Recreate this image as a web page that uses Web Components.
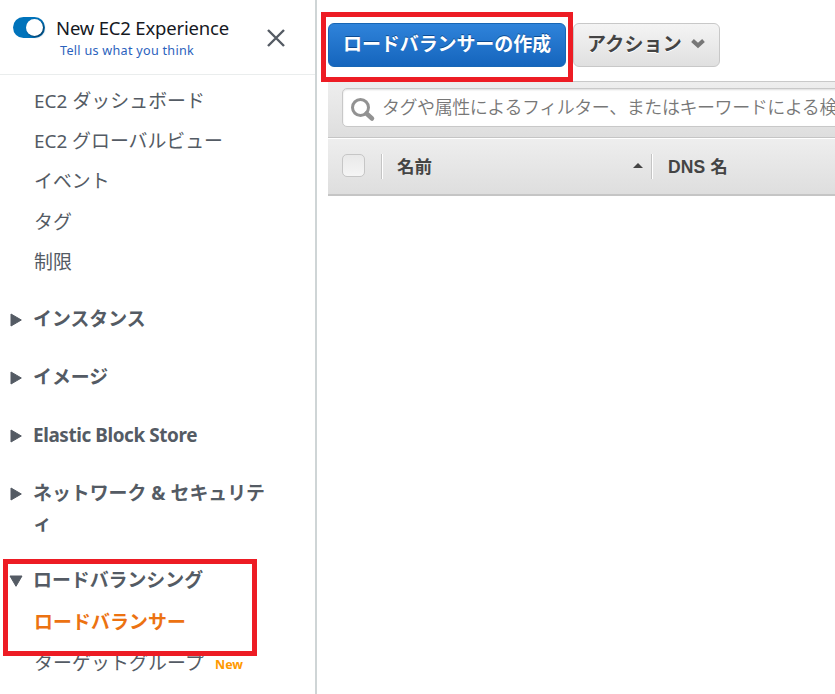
<!DOCTYPE html>
<html lang="ja">
<head>
<meta charset="utf-8">
<title>EC2</title>
<style>
html,body{margin:0;height:100%;overflow:hidden;background:#fff}
body{font-family:"Noto Sans","Noto Sans CJK JP",sans-serif;color:#545b64}
</style>
</head>
<body>
<ec2-app></ec2-app>
<script>
const define=(name,html,setup)=>customElements.define(name,class extends HTMLElement{
  constructor(){super();this.attachShadow({mode:'open'}).innerHTML=html}
  connectedCallback(){if(setup)setup(this,this.shadowRoot)}
});

/* Text run whose letter spacing is adjusted so that it occupies a given width. */
define('fit-text',`<style>:host{display:inline-block;white-space:nowrap}span{display:inline-block}</style><span><slot></slot></span>`,(el,root)=>{
  const w=parseFloat(el.getAttribute('width'));
  const s=root.querySelector('span');
  const n=[...el.textContent].length;
  const now=s.getBoundingClientRect().width;
  if(w&&now)s.style.letterSpacing=((w-now)/n).toFixed(3)+'px';
});

define('mark-box',`<style>:host{position:absolute;box-sizing:border-box;border:5px solid #ed1c24;z-index:5;pointer-events:none}</style>`);

define('experience-header',`<style>
:host{display:flex;box-sizing:border-box;height:75px;border-bottom:1px solid #eaeded;padding:15px 0 0 13px;align-items:flex-start}
.toggle{width:32px;height:21px;margin-top:2px;border-radius:11px;background:#0073bb;display:flex;justify-content:flex-end;align-items:center;box-sizing:border-box;padding-right:2px}
.toggle i{width:17px;height:17px;border-radius:50%;background:#fff;box-shadow:1px 1px 2px #00345a}
.t{margin-left:11px;width:200px}
.a{display:block;font-size:18.5px;line-height:25px;color:#16191f}
.b{display:block;font-size:12.6px;line-height:18px;margin:2px 0 0 4px;color:#2b62bd}
svg{margin:13px 0 0 10px}
</style>
<div class="toggle"><i></i></div>
<div class="t"><fit-text class="a" width="173">New EC2 Experience</fit-text><fit-text class="b" width="134">Tell us what you think</fit-text></div>
<svg width="20" height="20" viewBox="0 0 20 20"><path d="M2 2 18 18M18 2 2 18" stroke="#545b64" stroke-width="2.4" fill="none"/></svg>`);

define('nav-item',`<style>
:host{display:flex;align-items:center;height:40.4px;padding-left:34px;font-size:18.9px;font-weight:400;white-space:nowrap}
:host([active]){color:#ec7211;font-weight:700}
</style><slot></slot>`);

define('new-badge',`<style>:host{display:inline-block;font-size:12.5px;font-weight:700;color:#ff9900;margin:6px 0 0 11px}</style><fit-text width="28">New</fit-text>`);

define('nav-section',`<style>
:host{display:block;padding:14px 0}
.h{display:flex;padding-left:9px;font-size:18.9px;font-weight:700;line-height:30px}
svg{flex:none;margin:8px 10px 0 0}
:host([open]) svg{transform:rotate(90deg)}
.l{width:240px;word-break:break-all;line-break:anywhere}
.items{padding-top:6px}
:host([open]){padding-top:13px}
:host(:not([open])) .items{display:none}
</style>
<div class="h"><svg width="14" height="16" viewBox="0 0 14 16"><path d="M2 2 12.3 8 2 14Z" fill="#545b64" stroke="#545b64" stroke-linejoin="round"/></svg><div class="l"><slot name="title"></slot></div></div>
<div class="items"><slot></slot></div>`);

define('side-nav',`<style>
:host{display:block;box-sizing:border-box;width:317px;height:694px;overflow:hidden;border-right:2px solid #cfd5d6;background:#fff}
nav{padding-top:4.5px}
.links{padding-bottom:8.8px}
</style>
<experience-header></experience-header>
<nav>
<div class="links">
<nav-item><fit-text width="171">EC2 ダッシュボード</fit-text></nav-item>
<nav-item><fit-text width="189">EC2 グローバルビュー</fit-text></nav-item>
<nav-item>イベント</nav-item>
<nav-item>タグ</nav-item>
<nav-item>制限</nav-item>
</div>
<nav-section><span slot="title">インスタンス</span></nav-section>
<nav-section><span slot="title">イメージ</span></nav-section>
<nav-section><fit-text slot="title" width="164">Elastic Block Store</fit-text></nav-section>
<nav-section><span slot="title"><fit-text width="232">ネットワーク &amp; セキュリテ</fit-text><br>ィ</span></nav-section>
<nav-section open><span slot="title">ロードバランシング</span>
<nav-item active><fit-text width="152">ロードバランサー</fit-text></nav-item>
<nav-item><fit-text width="170">ターゲットグループ</fit-text><new-badge></new-badge></nav-item>
</nav-section>
</nav>`);

define('aws-button',`<style>
:host{display:flex;align-items:center;box-sizing:border-box;height:44px;border:1px solid #c8c8c8;border-radius:6px;font-size:19px;font-weight:700;color:#444;background:linear-gradient(#f4f4f4,#e0e0e0);text-shadow:0 1px 0 #fff;white-space:nowrap;padding:0 14px 4px 13px}
:host([primary]){color:#fff;border-color:#1766b5;background:linear-gradient(#2f83da,#1565bd);text-shadow:0 -1px 0 #0d4c93;padding:0 14px 4px}
</style><slot></slot>`);

define('search-box',`<style>
:host{display:flex;align-items:center;box-sizing:border-box;height:39px;width:520px;flex:none;border:1px solid #c8c8c8;border-radius:5px;background:#fff;padding-left:7px;color:#777;font-size:18px;font-weight:350;box-shadow:inset 0 1px 2px #ddd}
svg{margin:4px 6px 0 0;flex:none}
fit-text{padding-bottom:3px}
</style>
<svg width="26" height="26" viewBox="0 0 26 26" fill="none" stroke="#929292"><circle cx="10.5" cy="10.5" r="8" stroke-width="3"/><path d="M16.5 16.5 22 21.5" stroke-width="4.5" stroke-linecap="round"/></svg>
<fit-text width="455">タグや属性によるフィルター、またはキーワードによる検</fit-text>`);

define('table-head',`<style>
:host{display:flex;align-items:center;box-sizing:border-box;height:58px;background:linear-gradient(#eee,#dedede);border-top:1px solid #fff;border-bottom:2px solid #c5c5c5;padding:0 0 2px 14px;font-size:17.5px;font-weight:700;color:#444}
.check{box-sizing:border-box;width:23px;height:23px;border:1px solid #c6c6c6;border-radius:5px;background:linear-gradient(#e9e9e9,#f5f5f5)}
.sep{width:1px;height:25px;background:#c4c4c4;border-right:1px solid #fff}
.sep.one{margin:2px 14px 0 16px}.name{width:236px}
.sep.two{margin:2px 15px 0 8px}
.dns{font-family:"Liberation Sans","Noto Sans CJK JP",sans-serif}
</style>
<div class="check"></div><div class="sep one"></div><div class="name">名前</div>
<svg width="10" height="7" viewBox="0 0 10 7"><path d="M0 6 5 1 10 6Z" fill="#444"/></svg>
<div class="sep two"></div><div class="dns"><fit-text width="60">DNS 名</fit-text></div>`);

define('main-panel',`<style>
:host{display:block;flex:1;min-width:0;overflow:hidden;padding-left:11px}
.actions{display:flex;gap:7px;padding-top:23px;height:58px}
.filter{display:flex;box-sizing:border-box;height:57px;border-top:1px solid #c9c9c9;border-bottom:1px solid #c5c5c5;background:linear-gradient(#eee,#dedede);padding:6px 0 0 14px;overflow:hidden}
.caret{margin:1px 0 0 9px}
</style>
<div class="actions">
<aws-button primary><fit-text width="208">ロードバランサーの作成</fit-text></aws-button>
<aws-button><fit-text width="95">アクション</fit-text><svg class="caret" width="14" height="10" viewBox="0 0 14 10"><path d="M1.5 1.5 7 6.5 12.5 1.5" fill="none" stroke="#777" stroke-width="4"/></svg></aws-button>
</div>
<div class="filter"><search-box></search-box></div>
<table-head></table-head>`);

define('ec2-app',`<style>
:host{display:flex;position:relative;width:835px;height:694px;overflow:hidden}
.create{left:321px;top:12px;width:252px;height:70px}
.balancer{left:3px;top:559px;width:254px;height:97px}
side-nav{flex:none}
</style>
<side-nav></side-nav><main-panel></main-panel>
<mark-box class="create"></mark-box><mark-box class="balancer"></mark-box>`);
</script>
</body>
</html>
